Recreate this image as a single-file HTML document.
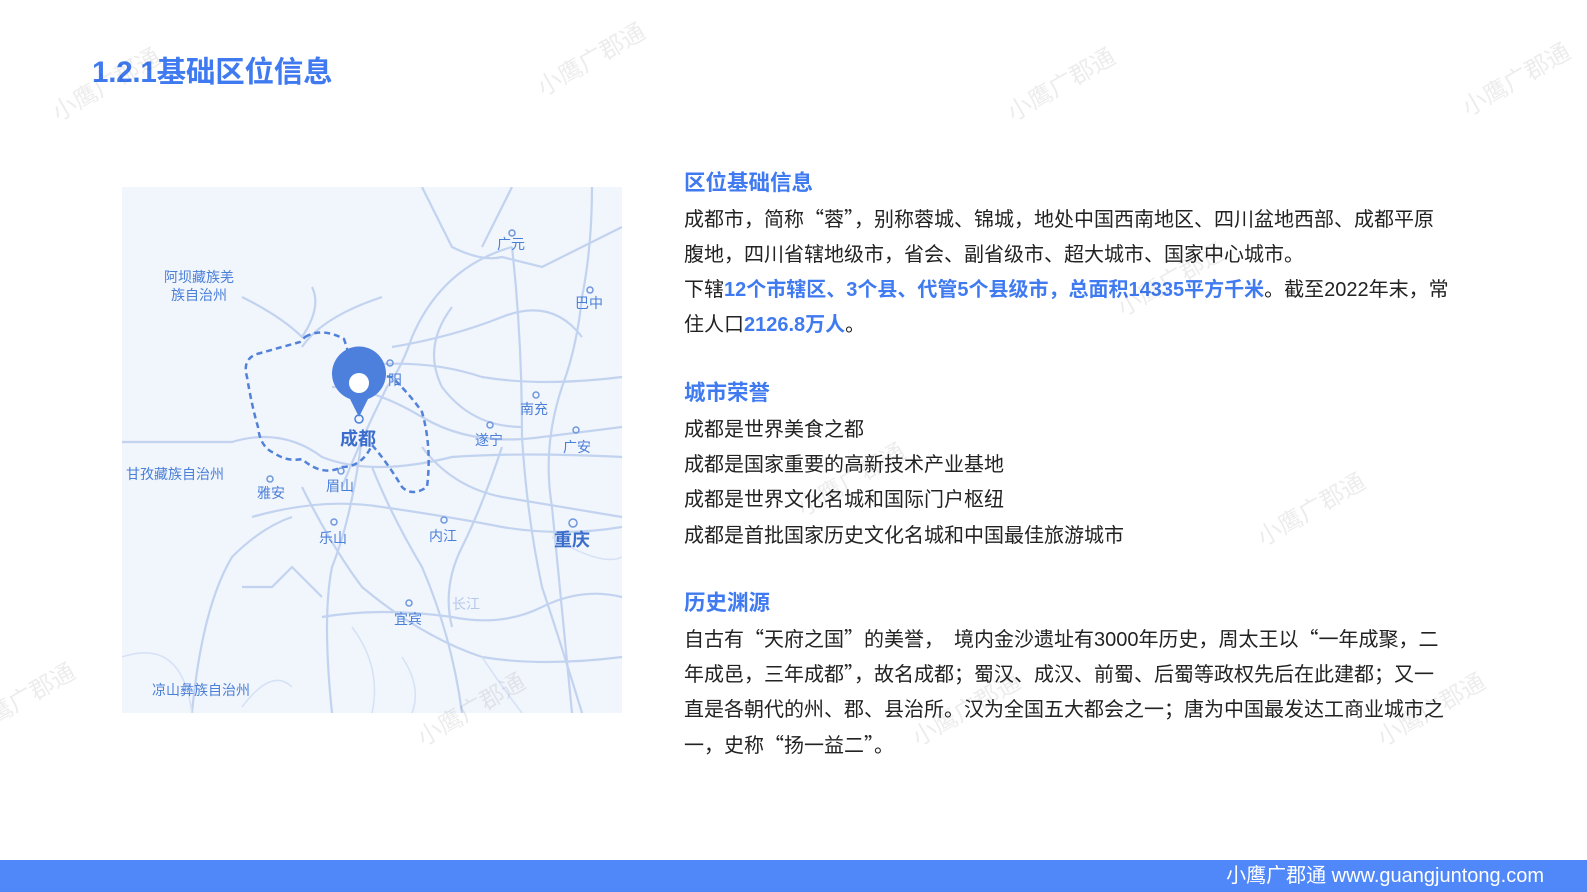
<!DOCTYPE html>
<html><head><meta charset="utf-8"><style>
*{margin:0;padding:0;box-sizing:border-box}
body{width:1587px;height:892px;position:relative;overflow:hidden;background:#fff;font-family:"Liberation Sans","Noto Sans CJK SC",sans-serif;color:#222}
.t{position:absolute;left:92px;top:49px;font-size:29.5px;font-weight:bold;color:#3f7af1;letter-spacing:-0.2px}
.h{position:absolute;left:684px;font-size:21.5px;font-weight:bold;color:#3f7af1;line-height:30px}
.p{position:absolute;left:684px;font-size:20px;line-height:35px;height:35px;white-space:nowrap;color:#222}
.q{font-family:"Noto Sans CJK SC",sans-serif;line-height:1px}
.b{color:#3f7af1;font-weight:bold}
.foot{position:absolute;left:0;top:860px;width:1587px;height:32px;background:#5088fa;color:#fff;font-size:20px;line-height:32px;text-align:right;padding-right:43px}
.wm{position:absolute;color:#000;opacity:.07;font-size:24px;transform:rotate(-30deg);white-space:nowrap}
.map{position:absolute;left:122px;top:187px;width:500px;height:526px;background:#f1f5fc;overflow:hidden}
.map text{font-family:"Liberation Sans","Noto Sans CJK SC",sans-serif;fill:#4a7fd8}
</style></head><body>
<div class="t">1.2.1基础区位信息</div>

<div class="map">
<svg width="500" height="526" viewBox="0 0 500 526">
<g fill="none" stroke="#c2d3f0" stroke-width="2.2">
<path d="M300 0 L320 40 L330 60 Q360 75 380 70 L420 80 L460 60 L500 40"/>
<path d="M390 0 Q370 40 360 60"/>
<path d="M390 60 Q320 80 290 150 Q280 180 265 200 Q240 250 220 300"/>
<path d="M390 60 Q400 150 400 250 Q405 330 420 400 Q440 460 460 526"/>
<path d="M470 0 Q470 60 460 110 Q455 160 440 200 Q420 260 430 320 L450 526"/>
<path d="M120 110 Q160 130 180 150 Q200 120 190 100"/>
<path d="M0 255 L110 255 Q160 240 200 270 Q250 290 330 270 Q400 265 500 270"/>
<path d="M130 330 Q200 310 260 320 Q330 330 380 340 Q440 350 500 340"/>
<path d="M180 300 Q210 360 240 400 Q300 450 360 470 Q420 480 500 470"/>
<path d="M210 200 Q250 200 300 230 Q350 260 420 250 L500 240"/>
<path d="M230 180 Q300 170 360 190 Q420 200 500 190"/>
<path d="M250 280 Q270 330 300 380 Q330 450 340 526"/>
<path d="M240 250 Q230 330 210 380 Q200 430 210 526"/>
<path d="M300 260 Q330 300 380 310 Q440 320 500 330"/>
<path d="M120 400 L150 400 L170 380 L200 410"/>
<path d="M70 526 Q80 420 110 370 Q140 340 170 330"/>
<path d="M200 430 Q260 420 330 430 Q380 440 420 420 Q460 400 500 410"/>
<path d="M330 120 Q300 160 320 200 Q350 240 400 240"/>
<path d="M380 260 Q360 320 340 360 Q320 400 330 440"/>
<path d="M260 110 Q200 130 180 160"/>
<path d="M270 160 Q330 150 380 130 Q430 110 460 150"/>
</g>
<g fill="none" stroke="#d5e1f5" stroke-width="1.5">
<path d="M230 440 Q260 480 250 526"/><path d="M280 470 Q300 500 290 526"/><path d="M360 470 Q380 500 400 526"/>
<path d="M120 520 Q150 480 170 500"/><path d="M430 350 Q480 380 500 370"/><path d="M0 470 Q60 450 70 526"/>
</g>
<path d="M183 150 Q200 140 222 152 Q228 170 230 185 L270 190 Q290 210 300 225 Q310 260 305 300 Q290 310 280 300 Q265 275 250 258 Q240 280 220 280 Q200 290 180 272 Q165 275 152 266 Q138 260 136 240 Q130 220 125 190 Q120 172 135 167 Q160 160 178 155 Z" fill="none" stroke="#5282d8" stroke-width="2.5" stroke-dasharray="6 4"/>
<circle cx="237" cy="232" r="4" fill="none" stroke="#4a7fd8" stroke-width="1.5"/>
<path d="M237 230 L228 212 A27 27 0 1 1 246 212 Z" fill="#4d80dc"/>
<circle cx="237" cy="196" r="10" fill="#fff"/>
<g font-size="14">
<text x="42" y="95">阿坝藏族羌</text><text x="49" y="113">族自治州</text>
<text x="4" y="292">甘孜藏族自治州</text>
<text x="30" y="508">凉山彝族自治州</text>
<text x="375" y="62">广元</text><text x="453" y="121">巴中</text>
<text x="266" y="198">阳</text><text x="398" y="227">南充</text>
<text x="353" y="258">遂宁</text><text x="441" y="265">广安</text>
<text x="135" y="311">雅安</text><text x="204" y="304">眉山</text>
<text x="197" y="356">乐山</text><text x="307" y="354">内江</text>
<text x="272" y="437">宜宾</text><text x="330" y="422" style="fill:#b5c8ea">长江</text>
</g>
<text x="218" y="258" font-size="18" font-weight="bold" style="fill:#3b6dcc">成都</text>
<text x="432" y="359" font-size="18" font-weight="bold" style="fill:#3b6dcc">重庆</text>
<g fill="none" stroke="#6f97dc" stroke-width="1.5">
<circle cx="390" cy="46" r="3"/><circle cx="468" cy="103" r="3"/><circle cx="268" cy="176" r="3"/><circle cx="414" cy="208" r="3"/><circle cx="368" cy="238" r="3"/><circle cx="454" cy="243" r="3"/><circle cx="148" cy="292" r="3"/><circle cx="219" cy="284" r="3"/><circle cx="212" cy="335" r="3"/><circle cx="322" cy="333" r="3"/><circle cx="287" cy="416" r="3"/><circle cx="451" cy="336" r="4"/>
</g>
</svg>
</div>

<div class="h" style="top:168px">区位基础信息</div>
<div class="p" style="top:203px">成都市，简称<span class="q">“蓉”</span>，别称蓉城、锦城，地处中国西南地区、四川盆地西部、成都平原</div>
<div class="p" style="top:238px">腹地，四川省辖地级市，省会、副省级市、超大城市、国家中心城市。</div>
<div class="p" style="top:273px">下辖<span class="b">12个市辖区、3个县、代管5个县级市，总面积14335平方千米</span>。截至2022年末，常</div>
<div class="p" style="top:308px">住人口<span class="b">2126.8万人</span>。</div>

<div class="h" style="top:378px">城市荣誉</div>
<div class="p" style="top:413px">成都是世界美食之都</div>
<div class="p" style="top:448px">成都是国家重要的高新技术产业基地</div>
<div class="p" style="top:483px">成都是世界文化名城和国际门户枢纽</div>
<div class="p" style="top:519px">成都是首批国家历史文化名城和中国最佳旅游城市</div>

<div class="h" style="top:588px">历史渊源</div>
<div class="p" style="top:623px">自古有<span class="q">“天府之国”</span>的美誉，　境内金沙遗址有3000年历史，周太王以<span class="q">“</span>一年成聚，二</div>
<div class="p" style="top:658px">年成邑，三年成都<span class="q">”</span>，故名成都；蜀汉、成汉、前蜀、后蜀等政权先后在此建都；又一</div>
<div class="p" style="top:693px">直是各朝代的州、郡、县治所。汉为全国五大都会之一；唐为中国最发达工商业城市之</div>
<div class="p" style="top:729px">一，史称<span class="q">“扬一益二”</span>。</div>

<div class="wm" style="left:45px;top:65px">小鹰广郡通</div>
<div class="wm" style="left:530px;top:40px">小鹰广郡通</div>
<div class="wm" style="left:1000px;top:65px">小鹰广郡通</div>
<div class="wm" style="left:1455px;top:60px">小鹰广郡通</div>
<div class="wm" style="left:1110px;top:260px">小鹰广郡通</div>
<div class="wm" style="left:1250px;top:490px">小鹰广郡通</div>
<div class="wm" style="left:1370px;top:690px">小鹰广郡通</div>
<div class="wm" style="left:905px;top:690px">小鹰广郡通</div>
<div class="wm" style="left:410px;top:690px">小鹰广郡通</div>
<div class="wm" style="left:-40px;top:680px">小鹰广郡通</div>
<div class="wm" style="left:790px;top:460px">小鹰广郡通</div>

<div class="foot">小鹰广郡通 www.guangjuntong.com</div>
</body></html>
